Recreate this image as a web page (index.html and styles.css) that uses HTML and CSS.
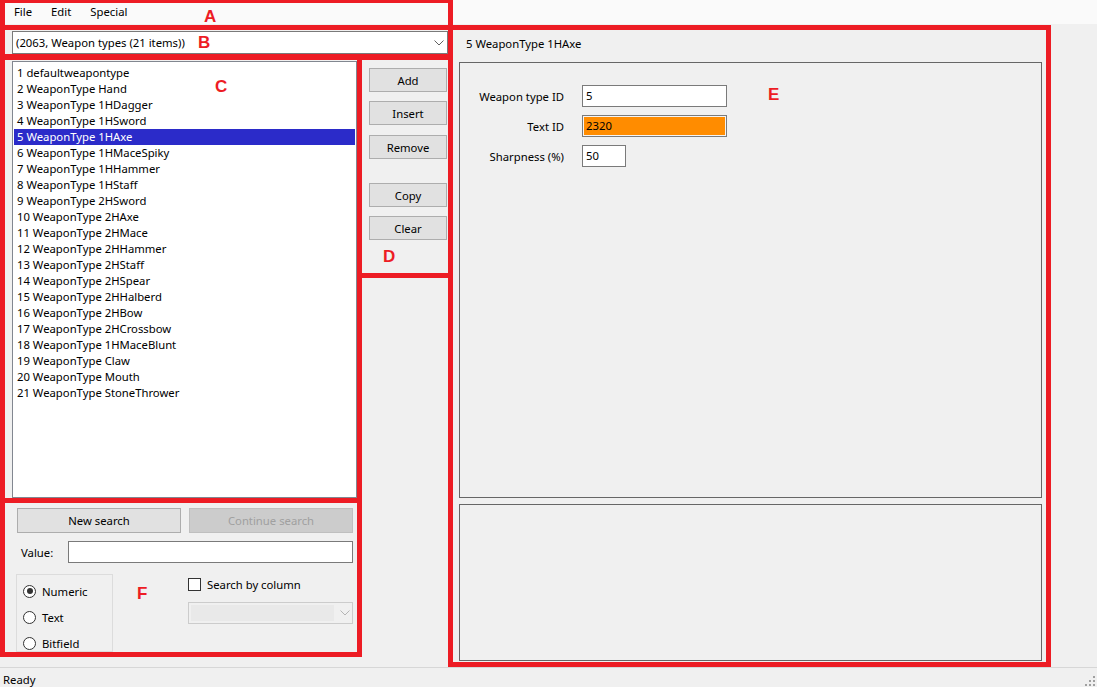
FILE: index.html
```html
<!DOCTYPE html>
<html>
<head>
<meta charset="utf-8">
<link rel="stylesheet" href="styles.css">
</head>
<body>
<div class="app">
  <div class="menubar">
    <span class="menu-item">File</span>
    <span class="menu-item">Edit</span>
    <span class="menu-item">Special</span>
  </div>
  <div class="main">
    <div class="left">
      <div class="combo">
        <span>(2063, Weapon types (21 items))</span>
        <svg class="chev" width="10" height="6" viewBox="0 0 10 6"><path d="M0.5 0.5 L5 5 L9.5 0.5" fill="none" stroke="#606060" stroke-width="1"/></svg>
      </div>
      <div class="listrow">
        <div class="listbox">
          <div class="item">1 defaultweapontype</div>
          <div class="item">2 WeaponType Hand</div>
          <div class="item">3 WeaponType 1HDagger</div>
          <div class="item">4 WeaponType 1HSword</div>
          <div class="item selected">5 WeaponType 1HAxe</div>
          <div class="item">6 WeaponType 1HMaceSpiky</div>
          <div class="item">7 WeaponType 1HHammer</div>
          <div class="item">8 WeaponType 1HStaff</div>
          <div class="item">9 WeaponType 2HSword</div>
          <div class="item">10 WeaponType 2HAxe</div>
          <div class="item">11 WeaponType 2HMace</div>
          <div class="item">12 WeaponType 2HHammer</div>
          <div class="item">13 WeaponType 2HStaff</div>
          <div class="item">14 WeaponType 2HSpear</div>
          <div class="item">15 WeaponType 2HHalberd</div>
          <div class="item">16 WeaponType 2HBow</div>
          <div class="item">17 WeaponType 2HCrossbow</div>
          <div class="item">18 WeaponType 1HMaceBlunt</div>
          <div class="item">19 WeaponType Claw</div>
          <div class="item">20 WeaponType Mouth</div>
          <div class="item">21 WeaponType StoneThrower</div>
        </div>
        <div class="buttons">
          <div class="btn b-add">Add</div>
          <div class="btn b-insert">Insert</div>
          <div class="btn b-remove">Remove</div>
          <div class="btn b-copy">Copy</div>
          <div class="btn b-clear">Clear</div>
        </div>
      </div>
      <div class="search">
        <div class="search-btns">
          <div class="btn wide">New search</div>
          <div class="btn wide disabled">Continue search</div>
        </div>
        <div class="value-row">
          <span class="value-label">Value:</span>
          <div class="textbox value-input"></div>
        </div>
        <div class="options">
          <div class="radiogroup">
            <div class="radio-row"><span class="radio checked"></span><span>Numeric</span></div>
            <div class="radio-row"><span class="radio"></span><span>Text</span></div>
            <div class="radio-row"><span class="radio"></span><span>Bitfield</span></div>
          </div>
          <div class="col-opts">
            <div class="check-row"><span class="checkbox"></span><span>Search by column</span></div>
            <div class="combo-disabled">
              <div class="cd-inner"></div>
              <svg class="chev2" width="10" height="6" viewBox="0 0 10 6"><path d="M0.5 0.5 L5 5 L9.5 0.5" fill="none" stroke="#b5b5b5" stroke-width="1"/></svg>
            </div>
          </div>
        </div>
      </div>
    </div>
    <div class="right">
      <div class="title">5 WeaponType 1HAxe</div>
      <div class="panel">
        <div class="fields">
          <span class="flabel">Weapon type ID</span>
          <div class="textbox field">5</div>
          <span class="flabel">Text ID</span>
          <div class="textbox field orange">2320</div>
          <span class="flabel">Sharpness (%)</span>
          <div class="textbox field short">50</div>
        </div>
      </div>
      <div class="panel2"></div>
    </div>
  </div>
  <div class="statusbar">
    <span class="status-text">Ready</span>
    <svg class="grip" width="12" height="12" viewBox="0 0 12 12">
      <rect x="9" y="1" width="2" height="2" fill="#a0a0a0"/>
      <rect x="5" y="5" width="2" height="2" fill="#a0a0a0"/>
      <rect x="9" y="5" width="2" height="2" fill="#a0a0a0"/>
      <rect x="1" y="9" width="2" height="2" fill="#a0a0a0"/>
      <rect x="5" y="9" width="2" height="2" fill="#a0a0a0"/>
      <rect x="9" y="9" width="2" height="2" fill="#a0a0a0"/>
    </svg>
  </div>

  <div class="annot">
    <div class="rbox ra"></div>
    <div class="rbox rb"></div>
    <div class="rbox rc"></div>
    <div class="rbox rd"></div>
    <div class="rbox re"></div>
    <div class="rbox rf"></div>
    <span class="rl la">A</span>
    <span class="rl lb">B</span>
    <span class="rl lc">C</span>
    <span class="rl ld">D</span>
    <span class="rl le">E</span>
    <span class="rl lf">F</span>
  </div>
</div>
</body>
</html>
```

FILE: styles.css
```css
* { box-sizing: border-box; }
html, body { margin: 0; padding: 0; }
body {
  background: #f0f0f0;
  font-family: "Segoe UI", "Noto Sans", "Open Sans", sans-serif;
  font-size: 11.3px;
  color: #000;
}
.app {
  position: relative;
  width: 1097px;
  height: 687px;
  display: flex;
  flex-direction: column;
  overflow: hidden;
}
.menubar {
  height: 24px;
  background: #fafafa;
  display: flex;
  align-items: flex-start;
  padding-left: 14px;
  padding-top: 4px;
  gap: 19px;
  flex: none;
}
.main {
  flex: 1;
  display: flex;
  min-height: 0;
}
.left {
  width: 448px;
  flex: none;
}
.combo {
  margin: 7px 0 0 12px;
  height: 23px;
  width: 436px;
  background: #fff;
  border: 1px solid #7a7a7a;
  display: flex;
  align-items: center;
  justify-content: space-between;
  padding: 0 3px 0 3px;
}
.listrow {
  display: flex;
  margin: 7px 0 0 12px;
  gap: 12px;
}
.listbox {
  width: 345px;
  height: 437px;
  background: #fff;
  border: 1px solid #828790;
  padding: 3px 1px;
}
.item {
  height: 16px;
  line-height: 16px;
  padding-left: 3px;
  white-space: nowrap;
}
.item.selected {
  background: #2b2bc9;
  color: #fff;
}
.buttons {
  display: flex;
  flex-direction: column;
  padding-top: 7px;
  width: 78px;
}
.btn {
  height: 24px;
  background: #e1e1e1;
  border: 1px solid #adadad;
  display: flex;
  align-items: center;
  justify-content: center;
}
.b-insert { margin-top: 9px; }
.b-remove { margin-top: 10px; }
.b-copy { margin-top: 24px; }
.b-clear { margin-top: 9px; }
.search {
  margin-top: 10px;
  padding-left: 17px;
}
.search-btns {
  display: flex;
  gap: 8px;
}
.btn.wide { width: 164px; height: 25px; }
.btn.disabled {
  background: #cccccc;
  border-color: #bfbfbf;
  color: #a0a0a0;
}
.value-row {
  display: flex;
  align-items: center;
  margin-top: 8px;
}
.value-label { width: 51px; padding-left: 4px; }
.textbox {
  background: #fff;
  border: 1px solid #7a7a7a;
}
.value-input { width: 285px; height: 22px; }
.options {
  display: flex;
  margin-top: 11px;
}
.radiogroup {
  margin-left: -1px;
  width: 97px;
  height: 78px;
  border: 1px solid #dcdcdc;
  padding: 3px 0 0 6px;
}
.radio-row {
  display: flex;
  align-items: center;
  gap: 6px;
  height: 26px;
}
.radio {
  width: 13px;
  height: 13px;
  border: 1px solid #333;
  border-radius: 50%;
  background: #fff;
  position: relative;
  flex: none;
}
.radio.checked::after {
  content: "";
  position: absolute;
  left: 2.5px;
  top: 2.5px;
  width: 6px;
  height: 6px;
  border-radius: 50%;
  background: #333;
}
.col-opts {
  margin-left: 75px;
  width: 165px;
}
.check-row {
  display: flex;
  align-items: center;
  gap: 6px;
  margin-top: 4px;
  height: 13px;
}
.checkbox {
  width: 13px;
  height: 13px;
  border: 1px solid #333;
  background: #fff;
  flex: none;
}
.combo-disabled {
  margin-top: 11px;
  height: 22px;
  border: 1px solid #cccccc;
  background: #f0f0f0;
  display: flex;
  align-items: center;
  padding: 2px;
  gap: 6px;
}
.cd-inner {
  width: 143px;
  height: 16px;
  background: #e9e9e9;
}
.right {
  margin-left: 11px;
  width: 583px;
  display: flex;
  flex-direction: column;
}
.title {
  height: 38px;
  padding: 12px 0 0 7px;
}
.panel {
  height: 436px;
  border: 1px solid #666;
  padding: 22px 0 0 0;
}
.panel2 {
  margin-top: 6px;
  height: 157px;
  border: 1px solid #666;
}
.fields {
  display: grid;
  grid-template-columns: 104px 145px;
  column-gap: 18px;
  row-gap: 8px;
  align-items: center;
}
.flabel { text-align: right; }
.field {
  height: 22px;
  line-height: 20px;
  padding-left: 3px;
}
.field.short { width: 44px; }
.field.orange {
  background: #ff8c00;
  box-shadow: inset 0 0 0 1px #f4f4f4;
}
.statusbar {
  height: 20px;
  flex: none;
  border-top: 1px solid #d7d7d7;
  padding-left: 3px;
  display: flex;
  align-items: center;
  justify-content: space-between;
}
.status-text { margin-top: 3px; }
.grip { margin-right: 1px; margin-top: 6px; }

.annot {
  position: absolute;
  inset: 0;
  pointer-events: none;
}
.rbox {
  position: absolute;
  border: 5px solid #ed1c24;
}
.ra { left: 0; top: -2px; width: 453px; height: 32px; }
.rb { left: 0; top: 25px; width: 453px; height: 34px; }
.rc { left: 0; top: 55px; width: 362px; height: 448px; }
.rd { left: 357px; top: 55px; width: 96px; height: 223px; }
.re { left: 448px; top: 25px; width: 603px; height: 642px; }
.rf { left: 0; top: 498px; width: 362px; height: 159px; }
.rl {
  position: absolute;
  color: #ed1c24;
  font-family: "Liberation Sans", Arial, sans-serif;
  font-weight: bold;
  font-size: 17px;
  line-height: 1;
}
.la { left: 204px; top: 8px; }
.lb { left: 198px; top: 34px; }
.lc { left: 215px; top: 78px; }
.ld { left: 383px; top: 248px; }
.le { left: 768px; top: 86px; }
.lf { left: 137px; top: 585px; }
```
